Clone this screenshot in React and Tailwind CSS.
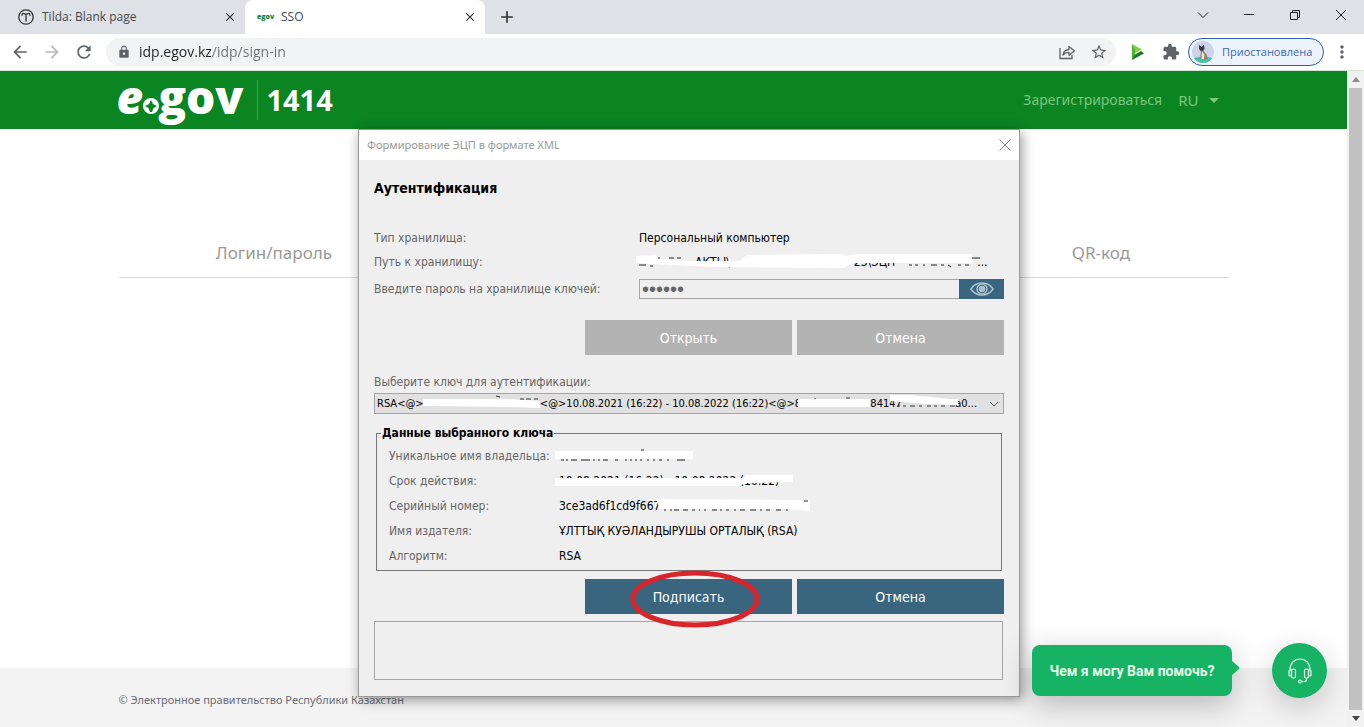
import {
  MdAdd,
  MdArrowBack,
  MdArrowForward,
  MdClose,
  MdExtension,
  MdLock,
  MdMoreVert,
  MdRefresh,
  MdStarBorder,
} from 'react-icons/md'

const NB = '\u00a0'
const keyLabel = `RSA<@>${NB.repeat(37)}<@>10.08.2021 (16:22) - 10.08.2022 (16:22)<@>8${NB.repeat(21)}:84147${NB.repeat(17)}a0...`

function TabStrip() {
  return (
    <div className="flex h-[34px] shrink-0 items-stretch bg-[#dee1e6] font-['Open_Sans',sans-serif] text-xs text-[#45494d]">
      <div className="flex w-[245px] items-center pl-[18px] pr-2">
        <svg width="16" height="16" viewBox="0 0 16 16" fill="none" stroke="#333" strokeWidth="1.3">
          <circle cx="8" cy="8" r="7.2" />
          <path d="M4 6.800c-.2-2 1-2.900 2.300-2.300.7.400 1.100 1 1.700 1s1-.6 1.700-1c1.300-.6 2.500.3 2.300 2.300M8 5.500v7" />
        </svg>
        <span className="ml-2 flex-1">Tilda: Blank page</span>
        <button aria-label="Закрыть вкладку Tilda" className="text-[#333]">
          <MdClose size={14} />
        </button>
      </div>
      <div className="flex w-60 items-center rounded-t-lg bg-white pl-3 pr-2">
        <span className="w-4 text-[7px] font-extrabold text-[#14803a]">egov</span>
        <span className="ml-2 flex-1">SSO</span>
        <button aria-label="Закрыть вкладку SSO" className="text-[#333]">
          <MdClose size={14} />
        </button>
      </div>
      <button aria-label="Новая вкладка" className="ml-3 text-[#333]">
        <MdAdd size={20} />
      </button>
      <div className="flex-1" />
      <div className="flex items-center pb-1 text-[#222]">
        <button aria-label="Поиск вкладок" className="flex w-[46px] justify-center">
          <svg width="12" height="12" viewBox="0 0 12 12" fill="none" stroke="currentColor">
            <path d="M1 3.500l5 5 5-5" />
          </svg>
        </button>
        <button aria-label="Свернуть" className="flex w-[46px] justify-center">
          <svg width="12" height="12" viewBox="0 0 12 12" fill="none" stroke="currentColor">
            <path d="M1 5.500h10" />
          </svg>
        </button>
        <button aria-label="Восстановить" className="flex w-[46px] justify-center">
          <svg width="12" height="12" viewBox="0 0 12 12" fill="none" stroke="currentColor">
            <path d="M1.500 3.500h7v7h-7zM3.500 3.500v-2h7v7h-2" />
          </svg>
        </button>
        <button aria-label="Закрыть" className="flex w-[46px] justify-center">
          <svg width="12" height="12" viewBox="0 0 12 12" fill="none" stroke="currentColor">
            <path d="M1 1l10 10M11 1L1 11" />
          </svg>
        </button>
      </div>
    </div>
  )
}

function Toolbar() {
  return (
    <div className="flex h-[37px] shrink-0 items-center border-b border-[#d5e8d8] bg-white pl-2.5 pr-3 font-['Open_Sans',sans-serif] text-[#5f6368]">
      <button aria-label="Назад">
        <MdArrowBack size={20} />
      </button>
      <button aria-label="Вперёд" className="ml-3 text-[#b8babd]">
        <MdArrowForward size={20} />
      </button>
      <button aria-label="Обновить" className="ml-3">
        <MdRefresh size={20} />
      </button>
      <div className="ml-3 flex h-7 flex-1 items-center rounded-full bg-[#f1f3f4] pl-[11px] pr-2">
        <MdLock size={14} />
        <input
          aria-label="Адресная строка"
          defaultValue="idp.egov.kz/idp/sign-in"
          className="ml-2 flex-1 bg-[linear-gradient(to_right,#202124_72px,#6b7075_72px)] bg-clip-text text-sm text-transparent outline-none"
        />
        <button aria-label="Поделиться">
          <svg width="18" height="18" viewBox="0 0 18 18" fill="none" stroke="currentColor" strokeWidth="1.300">
            <path d="M2 5v10.500h12V12" />
            <path d="M5 12c.5-3.500 2.500-5.300 6-5.500V3.500L16.500 8 11 12.300V9.500C8.500 9.300 6.800 10 5 12z" strokeLinejoin="round" />
          </svg>
        </button>
        <button aria-label="В закладки" className="ml-3.5">
          <MdStarBorder size={18} />
        </button>
      </div>
      <button aria-label="Расширение" className="ml-3.5">
        <svg width="16" height="16" viewBox="0 0 16 16">
          <path d="M2 0l10 5.500-7 3.500V5z" fill="#7fd03f" />
          <path d="M2 0v16l3-3V5z" fill="#4db32c" />
          <path d="M2 16l12-6.500-3-2.500-6 3.500z" fill="#1c7a2a" />
        </svg>
      </button>
      <button aria-label="Расширения" className="ml-4">
        <MdExtension size={18} />
      </button>
      <button className="ml-2 flex h-7 w-[136px] items-center rounded-full border border-[#2d62a8] bg-[#edf3fd] pl-[3px] text-[11px] text-[#3a68b0]">
        <svg width="22" height="22" viewBox="0 0 22 22">
          <circle cx="11" cy="11" r="11" fill="#cdd3ea" />
          <path d="M2 17.300c4-2 14-2 18 0A11 11 0 0 1 2 17.300z" fill="#45bfa5" />
          <path d="M7 4l2.500 2L12 4l.5 4-1 2 3.500 4 .5 4H8l1-7-2-3z" fill="#8c8377" />
          <path d="M10 10l2.500 4-.5 4H9.500z" fill="#efe3cd" />
          <path d="M7 4l2.500 2L12 4l.3 4-2.500 2.500L7 8z" fill="#3b3a40" />
        </svg>
        <span className="ml-2">Приостановлена</span>
      </button>
      <button aria-label="Меню" className="ml-2">
        <MdMoreVert size={20} />
      </button>
    </div>
  )
}

function SiteHeader() {
  return (
    <header className="h-[58px] bg-[#0b8422]">
      <div className="mx-auto flex h-full max-w-[1110px] items-center">
        <a href="#home" aria-label="egov" className="-ml-0.5 flex items-center font-['Open_Sans',sans-serif] text-[46px] leading-[58px] font-extrabold text-white">
          <span className="-mt-2 italic">e</span>
          <svg width="16" height="16" viewBox="0 0 16 16" className="mt-3">
            <circle cx="8" cy="8" r="8" fill="#fff" />
            <path d="M8 2l2 4 4 2-3.500 2L9 14H7l-1.500-4L2 8l4-2z" fill="#0b8422" />
          </svg>
          <span className="-ml-px -mt-2">gov</span>
        </a>
        <div className="ml-3.5 h-10 w-px bg-[#4c9c4c]" />
        <a href="tel:1414" className="ml-2 font-['Open_Sans',sans-serif] text-[29px] font-bold text-white">1414</a>
        <div className="flex-1" />
        <a href="#register" className="font-['Noto_Sans',sans-serif] text-sm text-[#7cc47f]">Зарегистрироваться</a>
        <button className="ml-4 mr-2.5 flex items-center gap-2.5 font-['Noto_Sans',sans-serif] text-[15px] text-[#7cc47f]">
          RU
          <svg width="10" height="5" viewBox="0 0 10 5" fill="currentColor">
            <path d="M0 0h10L5 5z" />
          </svg>
        </button>
      </div>
    </header>
  )
}

function Scrollbar() {
  return (
    <div className="flex w-[17px] shrink-0 flex-col items-center justify-between bg-[#f1f1f1] py-1.5">
      <svg width="8" height="5" viewBox="0 0 8 5" fill="#8b8b8b">
        <path d="M0 5h8L4 0z" />
      </svg>
      <div className="my-1.5 w-[13px] flex-1 bg-[#c1c1c1]" />
      <svg width="8" height="5" viewBox="0 0 8 5" fill="#444">
        <path d="M0 0h8L4 5z" />
      </svg>
    </div>
  )
}

function DialogButton({ children, muted }) {
  return (
    <button
      type="button"
      disabled={muted}
      className={
        muted
          ? 'h-[35px] w-[207px] bg-[#b3b3b3] text-sm text-white'
          : 'h-[35px] w-[207px] bg-[#3a657e] text-sm text-white'
      }
    >
      {children}
    </button>
  )
}

function KeyRow({ label, children }) {
  return (
    <div className="grid h-[25px] grid-cols-[170px_1fr] items-center">
      <dt className="text-[#666]">{label}</dt>
      <dd className="relative flex h-full items-center">{children}</dd>
    </div>
  )
}

function SignDialog() {
  return (
    <form
      role="dialog"
      aria-labelledby="dialog-title"
      className="absolute left-[358px] top-[58px] w-[662px] border border-[#9a9a9a] bg-[#efefef] font-['DejaVu_Sans_Condensed','DejaVu_Sans',sans-serif] text-xs text-black shadow-[2px_3px_12px_rgba(0,0,0,0.4)]"
    >
      <div className="flex h-[30px] items-center justify-between bg-white px-2">
        <span id="dialog-title" className="font-['Noto_Sans',sans-serif] text-[11px] text-[#999]">Формирование ЭЦП в формате XML</span>
        <button type="button" aria-label="Закрыть окно">
          <svg width="12" height="12" viewBox="0 0 12 12" fill="none" stroke="#888">
            <path d="M.5.500l11 11M11.500.500l-11 11" />
          </svg>
        </button>
      </div>

      <div className="px-[15px] pb-4 pt-[18px]">
        <h1 className="text-sm leading-5 font-bold">Аутентификация</h1>

        <div className="mt-7 grid h-6 grid-cols-[265px_1fr] items-center">
          <span className="text-[#666]">Тип хранилища:</span>
          <span>Персональный компьютер</span>
        </div>
        <div className="grid h-6 grid-cols-[265px_1fr] items-center">
          <span className="text-[#666]">Путь к хранилищу:</span>
          <span className="relative flex">
            <span className="ml-14">АКТЫ\</span>
            <span className="ml-[124px]">23\ЭЦП</span>
            <span className="ml-[82px]">...</span>
            <svg width="356" height="16" viewBox="0 0 356 16" className="absolute -left-1 top-0">
              <path d="M1 2l20-1 3 4 30 2 50 0 8-6 95-1 4 2 10-2 116 0 1 9-112 0-8 0-10 5-130-1-60-3-17-1z" fill="#fff" />
              <path d="M4 11h7M15 12h3M24 3v2M34 4h5M42 4h4M274 11h3M280 11h3M288 11h2M296 11h6M306 11h3M313 11l3 2M323 11h3M330 11h4M337 4h8" stroke="#222" />
            </svg>
          </span>
        </div>
        <div className="mt-[5px] grid h-5 grid-cols-[265px_1fr] items-center">
          <label htmlFor="store-password" className="text-[#666]">Введите пароль на хранилище ключей:</label>
          <div className="flex h-5">
            <input
              id="store-password"
              type="password"
              defaultValue="123456"
              className="min-w-0 flex-1 border border-r-0 border-[#a5a5a5] bg-[#efefef] px-0.5 font-['Liberation_Sans',sans-serif] text-xl text-[#666] outline-none"
            />
            <button type="button" aria-label="Показать пароль" className="flex w-[45px] items-center justify-center bg-[#3a657e]">
              <svg width="24" height="14" viewBox="0 0 24 14" fill="none" stroke="#a9c0cd" strokeWidth="1.500">
                <path d="M1 7c5-8 17-8 22 0-5 8-17 8-22 0z" />
                <circle cx="12" cy="7" r="5" />
                <circle cx="12" cy="7" r="2.500" fill="#a9c0cd" />
              </svg>
            </button>
          </div>
        </div>

        <div className="mt-[21px] flex justify-end gap-[5px]">
          <DialogButton muted>Открыть</DialogButton>
          <DialogButton muted>Отмена</DialogButton>
        </div>

        <label htmlFor="key" className="mt-[17px] block leading-5 text-[#666]">Выберите ключ для аутентификации:</label>
        <div className="relative mt-px">
          <select id="key" className="block h-[21px] w-full appearance-none border border-[#a5a5a5] bg-[#e1e1e1] px-0.5 pt-px text-[11px]">
            <option>{keyLabel}</option>
          </select>
          <svg width="630" height="21" viewBox="0 0 630 21" className="pointer-events-none absolute left-0 top-0">
            <path d="M49 6l84 0 33 2v7l-33-1-84-1zM424 6l72 0v8l-72 0zM516 2l20 0 40 4 8 0v6l-30-1-38-3z" fill="#fff" />
            <path d="M146 6h4M152 6h5M160 6h4M122 3l4 1M441 5v1M472 5h4M523 13h3M529 13h3M536 13h5M545 13h3M553 13h4M560 13h3M567 13h4M576 13h5" stroke="#333" />
            <path d="M616 9l4 4 4-4" fill="none" stroke="#555" />
          </svg>
        </div>

        <fieldset className="mx-0.5 mt-[9px] border border-[#777] px-3 pb-0.5">
          <legend className="-ml-2 px-px text-xs leading-5 font-bold">Данные выбранного ключа</legend>
          <dl>
            <KeyRow label="Уникальное имя владельца:">
              <svg width="140" height="14" viewBox="0 0 140 14" className="-ml-1">
                <path d="M0 2l138 0v8l-60 0-78 0z" fill="#fff" />
                <path d="M6 11h3M11 11h2M16 11h6M26 11h9M38 11h2M43 11h2M48 11h5M60 11h3M70 11h2M75 11h2M80 11h2M85 11h2M92 11h2M98 11h2M104 11h3M112 11h2M122 11h8M86 1h3" stroke="#222" />
              </svg>
            </KeyRow>
            <KeyRow label="Срок действия:">
              10.08.2021 (16:22) - 10.08.2022 (16:22)
              <svg width="240" height="14" viewBox="0 0 240 14" fill="#fff" className="absolute -left-1 top-1.5">
                <path d="M0 4l140 0 48 0 4 -3 46 0v7l-46 1-10 3-182 0z" />
              </svg>
            </KeyRow>
            <KeyRow label="Серийный номер:">
              3ce3ad6f1cd9f667
              <svg width="156" height="14" viewBox="0 0 156 14" className="-ml-1">
                <path d="M0 0l154 1v11l-14-1-10-1-126 0z" fill="#fff" />
                <path d="M8 11h2M14 11h2M18 11h5M27 11h5M36 11h3M43 11h1M48 11h2M56 11h5M64 11h2M70 11h3M78 11h2M84 11h5M94 11h6M104 11h2M110 11h4M120 11h5M130 11h2M148 2h4" stroke="#222" />
              </svg>
            </KeyRow>
            <KeyRow label="Имя издателя:">ҰЛТТЫҚ КУӘЛАНДЫРУШЫ ОРТАЛЫҚ (RSA)</KeyRow>
            <KeyRow label="Алгоритм:">RSA</KeyRow>
          </dl>
        </fieldset>

        <div className="relative mt-2 flex justify-end gap-[5px]">
          <DialogButton>Подписать</DialogButton>
          <DialogButton>Отмена</DialogButton>
          <svg width="132" height="60" viewBox="0 0 132 60" fill="none" className="pointer-events-none absolute -top-2.5 right-[243px]">
            <ellipse cx="66" cy="30" rx="62" ry="26" stroke="#d9242b" strokeWidth="5" />
          </svg>
        </div>

        <textarea
          aria-label="Сообщения"
          readOnly
          className="mt-[7px] block h-[59px] w-[629px] resize-none border border-[#a5a5a5] bg-[#efefef] outline-none"
        />
      </div>
    </form>
  )
}

function ChatWidget() {
  return (
    <div className="absolute bottom-[29px] right-5 flex items-center gap-10">
      <button className="relative h-[51px] w-[200px] rounded-lg bg-[#16b364] font-['Roboto',sans-serif] text-sm font-bold text-[#e6fbe9] shadow-[0_8px_30px_rgba(0,0,0,0.25)]">
        Чем я могу Вам помочь?
        <svg width="8" height="14" viewBox="0 0 8 14" fill="#16b364" className="absolute -right-2 top-4">
          <path d="M0 0l7 6q1 1 0 2l-7 6z" />
        </svg>
      </button>
      <button aria-label="Открыть чат" className="flex size-[55px] items-center justify-center rounded-full bg-[#16b364] shadow-[0_8px_30px_rgba(0,0,0,0.2)]">
        <svg width="24" height="26" viewBox="0 0 24 26" fill="none" stroke="#e6fbe9" strokeWidth="1.200">
          <path d="M2 12v-1a10 10 0 0 1 20 0v1" />
          <rect x="1" y="12" width="2.500" height="6" rx="1" />
          <rect x="3.500" y="11" width="4" height="9" rx="1.500" />
          <rect x="16.500" y="11" width="4" height="9" rx="1.500" />
          <rect x="20.500" y="12" width="2.500" height="6" rx="1" />
          <path d="M18.500 20v1.500q0 2-2 2h-3" />
          <circle cx="12" cy="23.500" r="1.500" />
        </svg>
      </button>
    </div>
  )
}

export default function App() {
  return (
    <div className="flex min-h-screen flex-col bg-white">
      <TabStrip />
      <Toolbar />
      <div className="flex flex-1">
        <div className="relative flex flex-1 flex-col">
          <SiteHeader />
          <main className="flex-1 pt-[99px]">
            <nav className="mx-auto flex h-[50px] max-w-[1110px] items-center border-b border-[#d8d8d8] font-['Noto_Sans',sans-serif] text-[17px] text-[#999]">
              <a href="#password" className="w-[28%] text-center">Логин/пароль</a>
              <div className="flex-1" />
              <a href="#qr" className="w-[23%] text-center">QR-код</a>
            </nav>
          </main>
          <footer className="h-[59px] bg-[#f3f3f3]">
            <p className="mx-auto max-w-[1110px] pt-[22px] font-['Noto_Sans',sans-serif] text-[11px] leading-5 text-[#666e75]">
              © Электронное правительство Республики Казахстан
            </p>
          </footer>
          <SignDialog />
          <ChatWidget />
        </div>
        <Scrollbar />
      </div>
    </div>
  )
}
